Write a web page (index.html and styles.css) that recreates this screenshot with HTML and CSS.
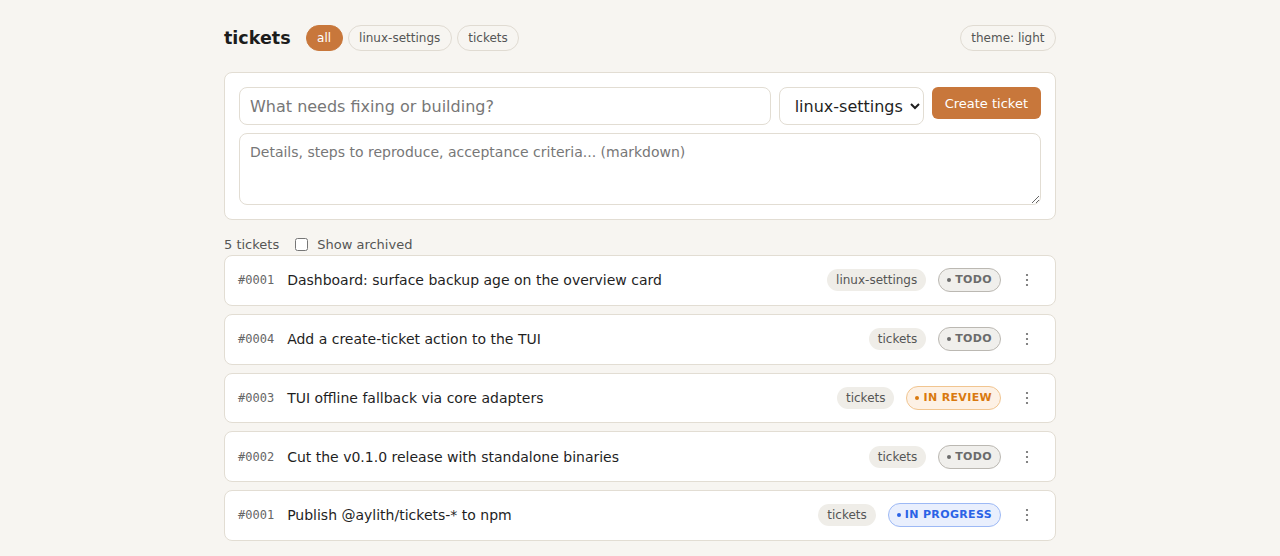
FILE: index.html
```html
<!DOCTYPE html>
<html>
<head>
<meta charset="utf-8">
<link rel="stylesheet" href="styles.css">
</head>
<body>
<div class="page">
  <header class="top">
    <h1 class="brand">tickets</h1>
    <nav class="chips">
      <button class="chip active">all</button>
      <button class="chip">linux-settings</button>
      <button class="chip">tickets</button>
    </nav>
    <button class="chip theme">theme: light</button>
  </header>

  <section class="card composer">
    <div class="line">
      <input class="field title-in" type="text" placeholder="What needs fixing or building?">
      <select class="field proj">
        <option>linux-settings</option>
        <option>tickets</option>
      </select>
      <button class="create">Create ticket</button>
    </div>
    <textarea class="field details" placeholder="Details, steps to reproduce, acceptance criteria... (markdown)"></textarea>
  </section>

  <div class="meta">
    <span class="count">5 tickets</span>
    <label class="arch"><input type="checkbox" class="cb"> Show archived</label>
  </div>

  <ul class="list">
    <li class="row">
      <span class="id">#0001</span>
      <span class="ttl">Dashboard: surface backup age on the overview card</span>
      <span class="tag">linux-settings</span>
      <span class="status todo"><i class="dot"></i>TODO</span>
      <button class="kebab"><svg width="4" height="14" viewBox="0 0 4 14"><circle cx="2" cy="2" r="1.1"/><circle cx="2" cy="7" r="1.1"/><circle cx="2" cy="12" r="1.1"/></svg></button>
    </li>
    <li class="row">
      <span class="id">#0004</span>
      <span class="ttl">Add a create-ticket action to the TUI</span>
      <span class="tag">tickets</span>
      <span class="status todo"><i class="dot"></i>TODO</span>
      <button class="kebab"><svg width="4" height="14" viewBox="0 0 4 14"><circle cx="2" cy="2" r="1.1"/><circle cx="2" cy="7" r="1.1"/><circle cx="2" cy="12" r="1.1"/></svg></button>
    </li>
    <li class="row">
      <span class="id">#0003</span>
      <span class="ttl">TUI offline fallback via core adapters</span>
      <span class="tag">tickets</span>
      <span class="status review"><i class="dot"></i>IN REVIEW</span>
      <button class="kebab"><svg width="4" height="14" viewBox="0 0 4 14"><circle cx="2" cy="2" r="1.1"/><circle cx="2" cy="7" r="1.1"/><circle cx="2" cy="12" r="1.1"/></svg></button>
    </li>
    <li class="row">
      <span class="id">#0002</span>
      <span class="ttl">Cut the v0.1.0 release with standalone binaries</span>
      <span class="tag">tickets</span>
      <span class="status todo"><i class="dot"></i>TODO</span>
      <button class="kebab"><svg width="4" height="14" viewBox="0 0 4 14"><circle cx="2" cy="2" r="1.1"/><circle cx="2" cy="7" r="1.1"/><circle cx="2" cy="12" r="1.1"/></svg></button>
    </li>
    <li class="row">
      <span class="id">#0001</span>
      <span class="ttl">Publish @aylith/tickets-* to npm</span>
      <span class="tag">tickets</span>
      <span class="status progress"><i class="dot"></i>IN PROGRESS</span>
      <button class="kebab"><svg width="4" height="14" viewBox="0 0 4 14"><circle cx="2" cy="2" r="1.1"/><circle cx="2" cy="7" r="1.1"/><circle cx="2" cy="12" r="1.1"/></svg></button>
    </li>
  </ul>
</div>
</body>
</html>
```

FILE: styles.css
```css
* { box-sizing: border-box; }
html, body { margin: 0; padding: 0; }
body {
  background: #f7f5f1;
  font-family: "DejaVu Sans", Verdana, sans-serif;
  color: #1f1f1f;
}
.page {
  width: 832px;
  margin: 0 auto;
  padding-top: 24px;
}
.top {
  display: flex;
  align-items: center;
  height: 27px;
  margin-bottom: 21px;
}
.brand {
  margin: 0 15px 0 0;
  font-size: 17.5px;
  font-weight: 700;
  color: #1c1c1c;
}
.chips { display: flex; gap: 5px; }
.chip {
  font-family: inherit;
  font-size: 12px;
  height: 26px;
  padding: 0 10.5px;
  border: 1px solid #e0dbd2;
  border-radius: 999px;
  background: #f7f5f1;
  color: #555;
  line-height: 24px;
}
.chip.active {
  background: #c8773b;
  border-color: #c8773b;
  color: #fff;
}
.theme { margin-left: auto; padding: 0 10.5px; }

.card {
  background: #fff;
  border: 1px solid #e2ddd3;
  border-radius: 8px;
}
.composer {
  padding: 14px;
  display: flex;
  flex-direction: column;
  gap: 8px;
}
.line { display: flex; gap: 8px; align-items: flex-start; }
.field {
  font-family: inherit;
  border: 1px solid #e2ddd3;
  border-radius: 8px;
  background: #fff;
  color: #1f1f1f;
}
.field::placeholder { color: #777; }
.title-in {
  flex: 1;
  height: 38px;
  font-size: 16px;
  padding: 0 10px;
}
.proj {
  width: 145px;
  height: 38px;
  font-size: 16px;
  padding: 0 2px 0 11px;
}
.create {
  font-family: inherit;
  font-size: 13px;
  height: 32px;
  padding: 0 13px;
  border: none;
  border-radius: 6px;
  background: #c8773b;
  color: #fff;
}
.details {
  height: 72px;
  font-size: 14px;
  padding: 10px;
  resize: vertical;
}

.meta {
  display: flex;
  align-items: center;
  gap: 16px;
  font-size: 13px;
  color: #555;
  margin: 15px 0 2px;
  height: 18px;
}
.arch { display: flex; align-items: center; gap: 9px; }
.cb { margin: 0; width: 13px; height: 13px; }

.list {
  list-style: none;
  margin: 0;
  padding: 0;
  display: flex;
  flex-direction: column;
  gap: 8px;
}
.row {
  display: flex;
  align-items: center;
  height: 50.75px;
  padding: 0 14px 0 13px;
  background: #fff;
  border: 1px solid #e2ddd3;
  border-radius: 8px;
}
.id {
  font-family: "DejaVu Sans Mono", monospace;
  font-size: 12px;
  color: #666;
  margin-right: 13px;
}
.ttl {
  flex: 1;
  font-size: 14px;
  color: #1f1f1f;
}
.tag {
  font-size: 12px;
  color: #555;
  background: #efede8;
  border-radius: 999px;
  padding: 0 9px;
  height: 22px;
  line-height: 22px;
  margin-right: 12px;
}
.status {
  display: inline-flex;
  align-items: center;
  gap: 4px;
  height: 24px;
  padding: 0 8px 1px;
  border-radius: 999px;
  border: 1px solid;
  font-size: 11px;
  font-weight: 700;
  letter-spacing: 0.35px;
  margin-right: 12px;
}
.dot {
  width: 4px;
  height: 4px;
  border-radius: 50%;
  background: currentColor;
  margin-top: 1px;
}
.todo { background: #f0efec; border-color: #bbb8b2; color: #6b6b6b; }
.review { background: #fdf1e5; border-color: #f1c590; color: #d9790f; }
.progress { background: #e9effd; border-color: #9db9f5; color: #2b63e6; }
.kebab {
  width: 28px;
  height: 28px;
  border: none;
  background: transparent;
  padding: 0;
  display: flex;
  align-items: center;
  justify-content: center;
  fill: #666;
}
```
